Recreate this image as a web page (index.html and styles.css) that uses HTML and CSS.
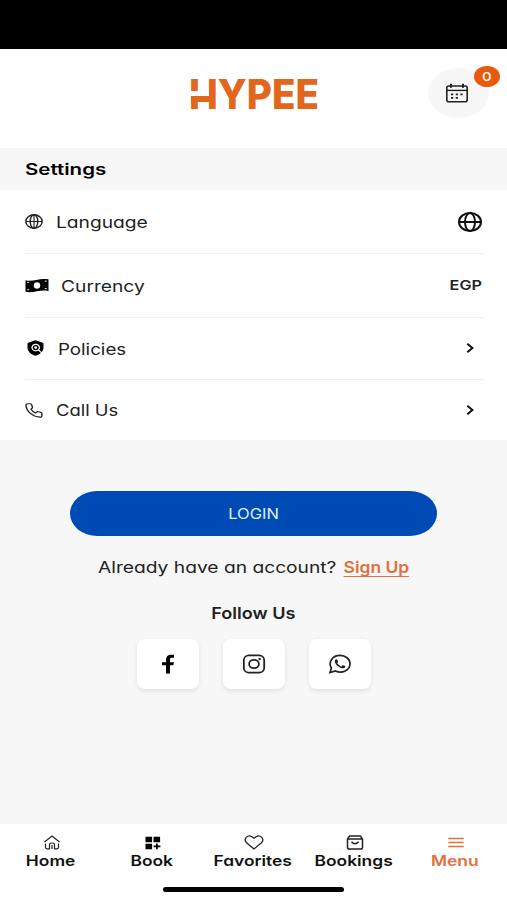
FILE: index.html
```html
<!DOCTYPE html>
<html lang="en">
<head>
    <title>Hypee</title>
    <meta charset="UTF-8">
    <link rel="stylesheet" href="styles.css">
</head>
<body>
    <div class="status"></div>
    <header>
        <div class="logo"><span>HYPEE</span></div>
        <div class="cart">
            <svg width="24" height="20" viewBox="0 0 24 20" fill="none" stroke="#222" stroke-width="1.6">
                <rect x="1.8" y="3" width="20.4" height="15.8" rx="2"/>
                <path d="M2 7.4h20" stroke-width="1.4"/>
                <path d="M6 .8v4M18 .8v4" stroke-width="2"/>
                <path d="M6 11.3h2.2M10.7 11.3h2.2M15.4 11.3h2.2M6 14.8h2.2M10.7 14.8h2.2" stroke-width="1.7"/>
            </svg>
            <b class="badge"><span>0</span></b>
        </div>
    </header>
    <h2><span>Settings</span></h2>
    <ul class="settings">
        <li class="language">
            <svg class="icon" width="18" height="15" viewBox="0 0 18 15" fill="none" stroke="#222" stroke-width="1.4">
                <ellipse cx="9" cy="7.5" rx="8.2" ry="6.8"/>
                <ellipse cx="9" cy="7.5" rx="3.8" ry="6.8"/>
                <path d="M1 7.5h16M9 .8v13.400" stroke-width="1.1"/>
            </svg>
            <span class="label">Language</span>
            <svg class="big-globe" width="24" height="20" viewBox="0 0 24 20" fill="none" stroke="currentColor" stroke-width="2">
                <ellipse cx="12" cy="10" rx="11" ry="9"/>
                <ellipse cx="12" cy="10" rx="5" ry="9"/>
                <path d="M1 10h22"/>
            </svg>
        </li>
        <li class="currency">
            <svg class="icon" width="24" height="15" viewBox="0 0 24 15">
                <path d="M.5 2.2C8 4.200 14-.5 23.500 1.300V13C15 11 9 15.500.5 13.700z" fill="#000"/>
                <circle cx="12" cy="7.500" r="3.200" fill="#fff"/>
                <path d="M2.300 4.400h1.800M2.300 11.800h1.800M19.800 3.100h1.800M19.800 10.600h1.800" stroke="#fff" stroke-width="1"/>
            </svg>
            <span class="label">Currency</span>
            <span class="value">EGP</span>
        </li>
        <li class="policies">
            <svg class="icon" width="17" height="16" viewBox="0 0 17 16">
                <path d="M8.500.3L16.500 3v4.500c0 4-3.500 7.200-8 8.300-4.500-1.100-8-4.300-8-8.300V3z" fill="#000"/>
                <ellipse cx="8.700" cy="7.600" rx="3.700" ry="3.200" fill="none" stroke="#fff" stroke-width="1.300"/>
                <ellipse cx="8.700" cy="7.600" rx="1.400" ry="1.300" fill="#fff"/>
                <path d="M11.300 9.800l4 3.800" stroke="#fff" stroke-width="1.200"/>
            </svg>
            <span class="label">Policies</span>
            <svg class="chevron" width="8" height="12" viewBox="0 0 8 12" fill="none" stroke="currentColor" stroke-width="2">
                <path d="M1.300 1.800L6.400 6l-5.100 4.200"/>
            </svg>
        </li>
        <li class="call">
            <svg class="icon" width="18" height="15" viewBox="0 0 24 24" preserveAspectRatio="none" fill="none" stroke="#222" stroke-width="1.900" stroke-linejoin="round">
                <path d="M22.500 17v3.500a2.200 2.200 0 0 1-2.400 2.200A20.500 20.500 0 0 1 1.300 3.600 2.200 2.200 0 0 1 3.500 1.200H7a2 2 0 0 1 2 1.700c.2 1.200.5 2.300.9 3.300a2 2 0 0 1-.5 2.200L8 9.900a16 16 0 0 0 6.200 6.100l1.400-1.400a2 2 0 0 1 2.200-.5c1 .4 2.100.7 3.200.9a2 2 0 0 1 1.500 2z"/>
            </svg>
            <span class="label">Call Us</span>
            <svg class="chevron" width="8" height="12" viewBox="0 0 8 12" fill="none" stroke="currentColor" stroke-width="2">
                <path d="M1.300 1.800L6.400 6l-5.100 4.200"/>
            </svg>
        </li>
    </ul>
    <main>
        <button class="login"><span>LOGIN</span></button>
        <p class="account"><span class="ask">Already have an account?</span><a href="#"><span>Sign Up</span></a></p>
        <h3><span>Follow Us</span></h3>
        <div class="social">
            <a href="#">
                <svg width="14" height="20" viewBox="0 0 14 20">
                    <path d="M5 19.500V11.300H1V8.200h4V5.500C5 2.200 7 .7 10 .7h3v3h-2C9.400 3.700 9 4.400 9 5.600v2.600h4l-.6 3.100H9v8.200z"/>
                </svg>
            </a>
            <a href="#">
                <svg width="24" height="20" viewBox="0 0 24 20" fill="none" stroke="#222" stroke-width="1.800">
                    <rect x="1.800" y="1.300" width="20.400" height="17.400" rx="5"/>
                    <ellipse cx="12" cy="10" rx="4.900" ry="4.200"/>
                    <circle cx="17.700" cy="5" r="1.200" fill="#222" stroke="none"/>
                </svg>
            </a>
            <a href="#">
                <svg width="24" height="20" viewBox="0 0 24 20" fill="none" stroke="#222" stroke-width="1.700">
                    <path d="M2 18.600l1.400-4.400C-.2 8 4.600 1.300 12 1.300c5.500 0 10 3.700 10 8.400 0 6.600-8 10.300-14.500 7.300z"/>
                    <path d="M7.500 5.400l1.500-.2 1.200 2.500-1 1.200c1 1.700 2.500 2.800 4.400 3.500l1.200-1.300 2.600 1.200c0 1.500-1.500 2.300-3 2C10.700 13.600 7 10.500 6.800 7.300c0-.8.2-1.400.7-1.900z" fill="#222" stroke="none"/>
                </svg>
            </a>
        </div>
    </main>
    <nav>
        <a href="#">
            <svg width="18" height="15" viewBox="0 0 18 15" fill="none" stroke="#222" stroke-width="1.200">
                <path d="M1.500 7L9 1l7.500 6M2.500 8.500v3.800q0 1.500 1.500 1.500h2.500V9.500q0-1.500 2.500-1.500t2.500 1.500v4.300H14q1.500 0 1.500-1.500V8.500M9 10v4"/>
            </svg>
            <span>Home</span>
        </a>
        <a href="#">
            <svg width="16" height="14" viewBox="0 0 16 14">
                <path d="M.5.700h6.600v5.500H.5zM8.500.700h6.600v5.500H8.500zM.5 7.700h6.600v5.500H.5zM11 7.500h1.800v2h2.600v1.700h-2.600v2H11v-2H8.500V9.500H11z"/>
            </svg>
            <span>Book</span>
        </a>
        <a href="#">
            <svg width="20" height="15" viewBox="0 0 20 15" fill="none" stroke="#222" stroke-width="1.300">
                <path d="M10 14L2.500 7.700C-1 4 3.500-.8 8 1.800L10 3.300l2-1.500c4.500-2.600 9 2.200 5.500 5.900z"/>
            </svg>
            <span>Favorites</span>
        </a>
        <a href="#">
            <svg width="18" height="15" viewBox="0 0 18 15" fill="none" stroke="#222" stroke-width="1.500">
                <path d="M1.500 3.900L3.700 1h10.600l2.200 2.900v8.400q0 1.800-2 1.800h-11q-2 0-2-1.800zM1.500 4.100h15M5.500 6.700q3.500 4 7 0"/>
            </svg>
            <span>Bookings</span>
        </a>
        <a href="#" class="active">
            <svg width="16" height="12" viewBox="0 0 16 12" stroke="currentColor" stroke-width="1.300">
                <path d="M.3 1.500h15.400M.3 5.500h15.400M.3 9.500h15.400"/>
            </svg>
            <span>Menu</span>
        </a>
    </nav>
    <div class="home-bar"></div>
</body>
</html>
```

FILE: styles.css
```css
* {
    box-sizing: border-box;
}
body {
    margin: 0;
    height: 900px;
    display: flex;
    flex-direction: column;
    overflow: hidden;
    background-color: #fff;
    color: #222;
    font-family: Inter, "Open Sans", sans-serif;
    font-feature-settings: "cv11", "ss03";
    font-size: 16px;
    line-height: 20px;
}
a {
    color: inherit;
    text-decoration: none;
}
svg {
    flex: none;
}
span {
    display: inline-block;
    white-space: nowrap;
}
.status {
    height: 49px;
    background-color: #000;
}
header {
    height: 99px;
    display: grid;
    grid-template-columns: 1fr 130px 1fr;
    align-items: center;
}
.logo {
    grid-column: 2;
    position: relative;
    height: 32px;
    margin-top: -10px;
    line-height: 32px;
    text-align: left;
    font-size: 41px;
    font-weight: 800;
    color: #e2661c;
}
.logo span {
    transform: scaleX(0.94);
    transform-origin: left;
}
/* the H has a notched left stem and a lowered crossbar */
.logo::before {
    content: "";
    position: absolute;
    z-index: 1;
    left: 0;
    top: 13px;
    width: 20px;
    height: 5px;
    background-color: #fff;
}
.logo::after {
    content: "";
    position: absolute;
    z-index: 1;
    left: 2px;
    top: 18px;
    width: 20px;
    height: 6px;
    background-color: #e2661c;
}
.cart {
    position: relative;
    justify-self: end;
    width: 61px;
    height: 50px;
    margin: -11px 18px 0 0;
    padding-right: 3px;
    display: flex;
    align-items: center;
    justify-content: center;
    border-radius: 50%;
    background-color: #f7f7f7;
}
.badge {
    position: absolute;
    top: -2px;
    right: -11px;
    width: 26px;
    height: 21px;
    border-radius: 50%;
    background-color: #e8590c;
    color: #fff;
    font-size: 12px;
    font-weight: 500;
    line-height: 21px;
    text-align: center;
}
.badge span {
    transform: scaleX(1.25);
}
h2 {
    height: 42px;
    margin: 0;
    padding-left: 25px;
    background-color: #f7f7f7;
    color: #000;
    font-size: 16px;
    font-weight: 600;
    line-height: 42px;
}
h2 span {
    transform: scaleX(1.28);
    transform-origin: left;
}
.settings {
    height: 250px;
    margin: 0;
    padding: 0 24px 0 25px;
    list-style: none;
}
.settings li {
    height: 63px;
    display: flex;
    align-items: center;
    border-bottom: 1px solid #f0f0f0;
}
.settings .language {
    height: 64px;
}
.settings .currency {
    height: 64px;
}
.settings .policies {
    height: 62px;
    padding-bottom: 1px;
}
.settings .call {
    height: 60px;
    border: 0;
}
.label {
    margin: 1px auto 0 13px;
    transform: scaleX(1.2);
    transform-origin: left;
}
.currency .label {
    margin-left: 11.5px;
}
.policies .icon {
    margin-left: 2px;
}
.policies .label {
    margin-left: 14px;
    transform: scaleX(1.17);
}
.call .label {
    margin-top: 0;
    transform: scaleX(1.15);
}
.big-globe {
    margin-right: 1px;
    color: #111;
}
.value {
    margin: -1px 1px 0 0;
    font-size: 13.5px;
    font-weight: 600;
    transform: scaleX(1.2);
    transform-origin: right;
}
.chevron {
    margin-right: 9px;
    color: #111;
}
main {
    height: 384px;
    padding-top: 51px;
    display: flex;
    flex-direction: column;
    align-items: center;
    background-color: #f7f7f7;
}
.login {
    width: 367px;
    height: 45px;
    border: 0;
    border-radius: 28px / 23px;
    background-color: #004ab5;
    color: #dff0ff;
    font: inherit;
    font-size: 14px;
}
.login span {
    transform: scaleX(1.18);
}
.account {
    width: 311px;
    margin: 21px 0 0;
    display: flex;
    justify-content: space-between;
}
.ask {
    transform: scaleX(1.2);
    transform-origin: left;
}
.account a {
    color: #e2703a;
    font-weight: 600;
}
.account a span {
    line-height: 18px;
    border-bottom: 1px solid;
    transform: scaleX(1.09);
    transform-origin: right;
}
h3 {
    margin: 26px 0 0;
    font-size: 16px;
    font-weight: 600;
}
h3 span {
    transform: scaleX(1.13);
}
.social {
    margin-top: 16px;
    display: flex;
    gap: 24px;
}
.social a {
    width: 62px;
    height: 50px;
    display: flex;
    align-items: center;
    justify-content: center;
    border-radius: 8px;
    background-color: #fff;
    box-shadow: 0 2px 5px rgba(0, 0, 0, 0.09);
}
nav {
    height: 62px;
    padding-top: 11px;
    display: grid;
    grid-template-columns: repeat(5, 101px);
    grid-template-rows: 36px;
    justify-content: center;
    color: #111;
    font-size: 14.5px;
    font-weight: 600;
}
nav a {
    display: grid;
    grid-template-rows: 15px 21px;
    place-items: center;
}
nav span {
    transform: translateX(-1px) scaleX(1.2);
}
nav .active {
    color: #e2703a;
}
.home-bar {
    width: 181px;
    height: 5px;
    margin: 1px auto 0;
    border-radius: 3px;
    background-color: #000;
}
```
